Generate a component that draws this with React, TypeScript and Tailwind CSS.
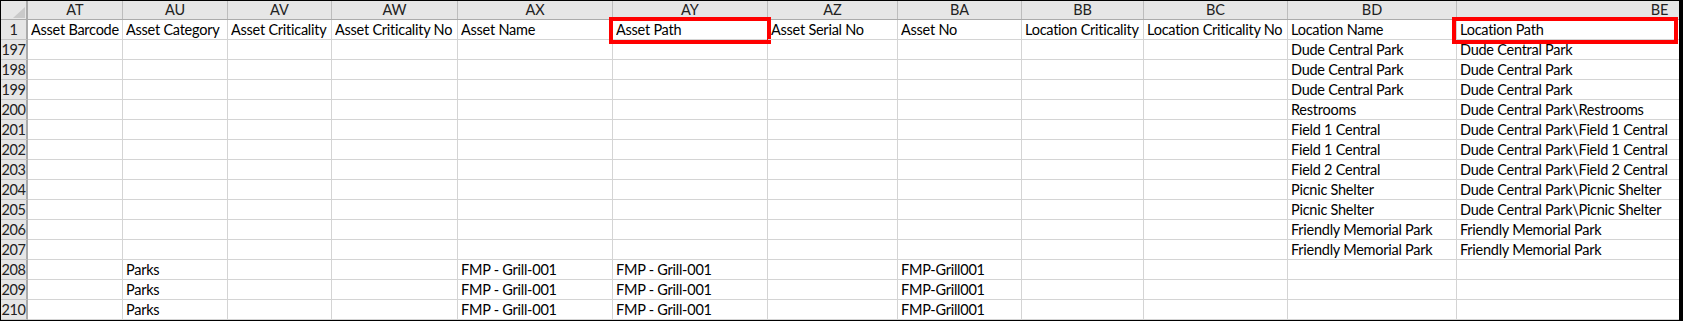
const cols = [
  { key: "AT", width: 95, title: "Asset Barcode" },
  { key: "AU", width: 105, title: "Asset Category" },
  { key: "AV", width: 104, title: "Asset Criticality" },
  { key: "AW", width: 126, title: "Asset Criticality No" },
  { key: "AX", width: 155, title: "Asset Name" },
  { key: "AY", width: 155, title: "Asset Path", mark: "w-[162px] -left-[4px]" },
  { key: "AZ", width: 130, title: "Asset Serial No" },
  { key: "BA", width: 124, title: "Asset No" },
  { key: "BB", width: 122, title: "Location Criticality" },
  { key: "BC", width: 144, title: "Location Criticality No" },
  { key: "BD", width: 169, title: "Location Name" },
  { key: "BE", width: 406, title: "Location Path", mark: "w-[226px] -left-[5px]" },
];

const dude = "Dude Central Park";
const fmp = "Friendly Memorial Park";

const rows: { n: number; cells: Record<string, string> }[] = [
  { n: 197, cells: { BD: dude, BE: dude } },
  { n: 198, cells: { BD: dude, BE: dude } },
  { n: 199, cells: { BD: dude, BE: dude } },
  { n: 200, cells: { BD: "Restrooms", BE: "Dude Central Park\\Restrooms" } },
  { n: 201, cells: { BD: "Field 1 Central", BE: "Dude Central Park\\Field 1 Central" } },
  { n: 202, cells: { BD: "Field 1 Central", BE: "Dude Central Park\\Field 1 Central" } },
  { n: 203, cells: { BD: "Field 2 Central", BE: "Dude Central Park\\Field 2 Central" } },
  { n: 204, cells: { BD: "Picnic Shelter", BE: "Dude Central Park\\Picnic Shelter" } },
  { n: 205, cells: { BD: "Picnic Shelter", BE: "Dude Central Park\\Picnic Shelter" } },
  { n: 206, cells: { BD: fmp, BE: fmp } },
  { n: 207, cells: { BD: fmp, BE: fmp } },
  { n: 208, cells: { AU: "Parks", AX: "FMP - Grill-001", AY: "FMP - Grill-001", BA: "FMP-Grill001" } },
  { n: 209, cells: { AU: "Parks", AX: "FMP - Grill-001", AY: "FMP - Grill-001", BA: "FMP-Grill001" } },
  { n: 210, cells: { AU: "Parks", AX: "FMP - Grill-001", AY: "FMP - Grill-001", BA: "FMP-Grill001" } },
];

const RowNum = ({ n }: { n: number }) => (
  <div className="w-[27px] shrink-0 h-[20px] bg-[#e6e6e6] border-r-2 border-r-[#ababab] border-b border-b-[#c4c4c4] text-center text-[14.5px] leading-[19px] tracking-[-0.4px] text-[#222]">
    {n}
  </div>
);

export default function App() {
  return (
    <div
      className="w-[1683px] h-[321px] bg-black pt-[1px] pl-[1px] pr-[4px] pb-[1px]"
      style={{ fontFamily: "Lato, 'Liberation Sans', sans-serif" }}
    >
      <div className="w-full h-full bg-white overflow-hidden">
        {/* column letters */}
        <div className="flex h-[19px] bg-[#e6e6e6] border-b border-b-[#ababab]">
          <div className="w-[27px] shrink-0 border-r-2 border-r-[#ababab] flex items-end justify-end pr-[1px] pb-[1px]">
            <svg width="12" height="11" viewBox="0 0 12 11">
              <polygon points="12,0 12,11 0,11" fill="#c9c9c9" />
            </svg>
          </div>
          {cols.map((c) => (
            <div
              key={c.key}
              style={{ width: c.width }}
              className="shrink-0 border-r border-r-[#bdbdbd] text-center text-[14.5px] leading-[18px] text-[#222]"
            >
              {c.key}
            </div>
          ))}
        </div>

        {/* header row */}
        <div className="flex">
          <RowNum n={1} />
          {cols.map((c) => (
            <div
              key={c.key}
              style={{ width: c.width }}
              className="relative shrink-0 h-[20px] border-r border-b border-[#d4d4d4] pl-[3px] text-[14.5px] leading-[20px] tracking-[-0.25px] text-black whitespace-nowrap"
            >
              <div className="overflow-hidden">{c.title}</div>
              {c.mark && (
                <div className={`absolute -top-[3px] h-[27px] border-4 border-[#ff0000] ${c.mark}`} />
              )}
            </div>
          ))}
        </div>

        {rows.map((r) => (
          <div key={r.n} className="flex">
            <RowNum n={r.n} />
            {cols.map((c) => (
              <div
                key={c.key}
                style={{ width: c.width }}
                className="shrink-0 h-[20px] border-r border-b border-[#d4d4d4] pl-[3px] text-[14.5px] leading-[20px] tracking-[-0.25px] text-black whitespace-nowrap overflow-hidden"
              >
                {r.cells[c.key] ?? ""}
              </div>
            ))}
          </div>
        ))}
      </div>
    </div>
  );
}
